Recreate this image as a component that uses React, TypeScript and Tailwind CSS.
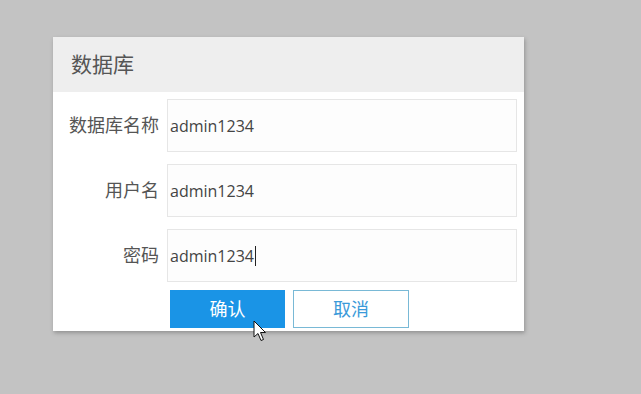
import React from 'react'

const fields = [
  { label: '数据库名称', value: 'admin1234' },
  { label: '用户名', value: 'admin1234' },
  { label: '密码', value: 'admin1234', caret: true },
]

const App = () => {
  return (
    <div className="relative w-[641px] h-[394px] bg-[#c3c3c3] overflow-hidden" style={{ fontFamily: '"Open Sans", "Noto Sans CJK SC", sans-serif' }}>
      <div className="absolute left-[53px] top-[37px] w-[471px] bg-white shadow-[1px_2px_4px_rgba(0,0,0,0.25)]">
        <div className="h-[55px] bg-[#eeeeee] flex items-center pl-[18px] text-[21px] text-[#555555]">数据库</div>
        <div className="flex flex-col gap-[12px] pt-[7px]">
          {fields.map((f) => (
            <div key={f.label} className="flex items-center">
              <div className="w-[106px] text-right text-[18px] text-[#555555]">{f.label}</div>
              <div className="ml-[8px] w-[350px] h-[53px] border border-[#e6e6e6] bg-[#fdfdfd] flex items-center pl-[2px] text-[16px] text-[#444444]">
                {f.value}
                {f.caret && <span className="w-[1px] h-[20px] bg-[#222222] ml-[1px]" />}
              </div>
            </div>
          ))}
        </div>
        <div className="flex gap-[8px] pl-[117px] pt-[8px] pb-[3px]">
          <div className="w-[115px] h-[38px] bg-[#1a94e6] text-white text-[18px] flex items-center justify-center">确认</div>
          <div className="w-[116px] h-[38px] border border-[#79b9d6] bg-white text-[#3a9ad9] text-[18px] flex items-center justify-center">取消</div>
        </div>
      </div>
      <svg className="absolute left-[253px] top-[320px]" width="16" height="24" viewBox="0 0 16 24">
        <path d="M1 1 L1 17 L5 13.5 L8 20.5 L10.5 19.5 L7.5 12.5 L12.5 12.5 Z" fill="#ffffff" stroke="#111111" strokeWidth="1" strokeLinejoin="round" />
      </svg>
    </div>
  )
}

export default App
